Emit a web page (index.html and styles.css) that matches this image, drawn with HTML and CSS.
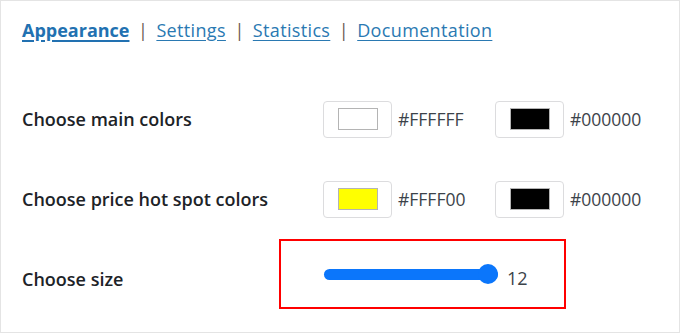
FILE: index.html
```html
<!DOCTYPE html>
<html>
<head>
  <meta charset="UTF-8"/>
  <title>Appearance</title>
  <link rel="stylesheet" href="styles.css">
</head>
<body>
  <div class="page">
    <div class="tabs">
      <a class="current" href="#">Appearance</a>
      <span class="sep">|</span>
      <a href="#">Settings</a>
      <span class="sep">|</span>
      <a href="#">Statistics</a>
      <span class="sep">|</span>
      <a href="#">Documentation</a>
    </div>

    <div class="options">
      <div class="row">
        <div class="label">Choose main colors</div>
        <div class="field">
          <button class="picker"><span class="swatch" style="background:#FFFFFF"></span></button>
          <span class="hex">#FFFFFF</span>
          <button class="picker"><span class="swatch" style="background:#000000"></span></button>
          <span class="hex">#000000</span>
        </div>
      </div>

      <div class="row">
        <div class="label">Choose price hot spot colors</div>
        <div class="field">
          <button class="picker"><span class="swatch" style="background:#FFFF00"></span></button>
          <span class="hex">#FFFF00</span>
          <button class="picker"><span class="swatch" style="background:#000000"></span></button>
          <span class="hex">#000000</span>
        </div>
      </div>

      <div class="row row-size">
        <div class="label">Choose size</div>
        <div class="field">
          <div class="highlight">
            <input class="size" type="range" min="1" max="12" value="12">
            <span class="value">12</span>
          </div>
        </div>
      </div>
    </div>
  </div>
</body>
</html>
```

FILE: styles.css
```css
html, body {
  margin: 0;
  background: #fff;
}
body {
  font-family: "Open Sans", "Noto Sans", sans-serif;
  color: #1d2327;
}
.page {
  box-sizing: border-box;
  width: 680px;
  height: 333px;
  border: 1px solid #e4e4e4;
  padding: 17px 0 0 21px;
}
.tabs {
  font-size: 18px;
  line-height: 24px;
  display: flex;
  gap: 8.5px;
}
.tabs a {
  color: #2a79b2;
  text-decoration: underline;
  text-underline-offset: 3px;
  letter-spacing: 0.35px;
}
.tabs a.current {
  font-weight: 700;
  color: #2271b1;
  text-decoration-thickness: 2px;
  letter-spacing: 0;
}
.tabs .sep {
  color: #6b5a52;
}
.options {
  margin-top: 37px;
}
.row {
  display: flex;
  align-items: center;
  height: 80px;
}
.row-size {
  height: 70px;
}
.row-size .label {
  padding-top: 9px;
}
.label {
  width: 301px;
  font-size: 18px;
  font-weight: 600;
}
.field {
  display: flex;
  align-items: center;
}
.picker {
  width: 69px;
  height: 37px;
  padding: 0;
  background: #fff;
  border: 1px solid #dcdcde;
  border-radius: 4px;
  display: flex;
  align-items: center;
  justify-content: center;
}
.swatch {
  display: block;
  width: 40px;
  height: 22px;
  box-sizing: border-box;
  border: 1px solid #b4b4b4;
}
.hex {
  font-size: 17.5px;
  color: #3c434a;
  margin: 0 8px 0 6px;
  width: 89px;
}
.highlight {
  margin-left: -44px;
  width: 287px;
  height: 70px;
  border: 2px solid #f00;
  display: flex;
  align-items: center;
  padding-left: 43px;
  box-sizing: border-box;
}
.size {
  -webkit-appearance: none;
  appearance: none;
  width: 174px;
  height: 20px;
  margin: 0;
  background: transparent;
}
.size::-webkit-slider-runnable-track {
  height: 11px;
  border-radius: 6px;
  background: #0b76fb;
}
.size::-webkit-slider-thumb {
  -webkit-appearance: none;
  width: 20px;
  height: 20px;
  margin-top: -4.5px;
  border-radius: 50%;
  background: #0b76fb;
  border: none;
}
.value {
  font-size: 18px;
  color: #3c434a;
  margin-left: 9px;
  padding-top: 8px;
}
```
